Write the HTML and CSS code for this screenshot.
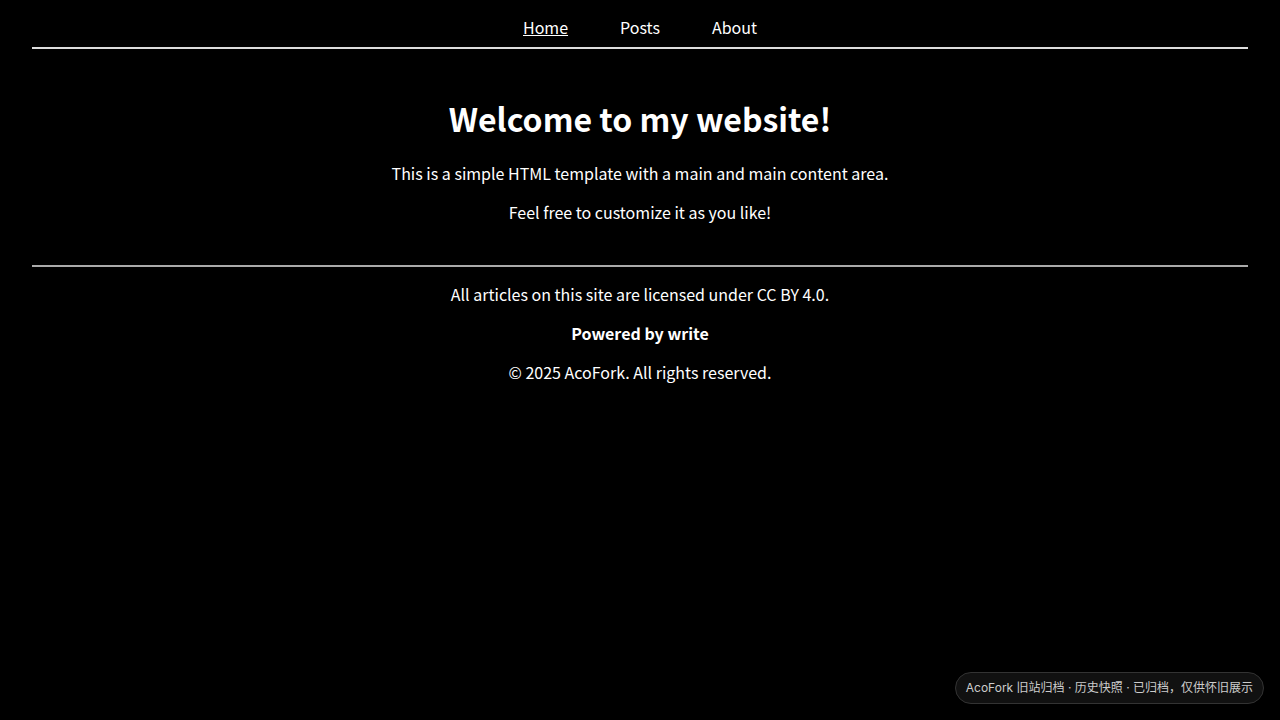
FILE: index.html
```html
<!DOCTYPE html>
<html lang="zh-CN">
<head>
    <meta charset="UTF-8">
    <meta name="viewport" content="width=device-width, initial-scale=1.0">
    <link rel="stylesheet" href="styles.css">
</head>
<body>
<header class="site-header">
    <nav class="nav">
        <a href="#" class="active">Home</a>
        <a href="#">Posts</a>
        <a href="#">About</a>
    </nav>
</header>
<main class="main">
    <h1>Welcome to my website!</h1>
    <p>This is a simple HTML template with a main and main content area.</p>
    <p>Feel free to customize it as you like!</p>
</main>
<footer class="site-footer">
    <p>All articles on this site are licensed under CC BY 4.0.</p>
    <p><strong>Powered by write</strong></p>
    <p>© 2025 AcoFork. All rights reserved.</p>
</footer>
<div class="archive-badge">AcoFork 旧站归档 · 历史快照 · 已归档，仅供怀旧展示</div>
</body>
</html>
```

FILE: styles.css
```css
html, body{
	background:#000;
}
body{
	margin:0;
	padding:0 32px;
	color:#fff;
	font-family:"Noto Sans CJK SC", "Noto Sans", sans-serif;
	font-size:16px;
	line-height:23px;
	text-align:center;
}
.site-header{
	border-bottom:2px solid #ddd;
}
.nav{
	display:flex;
	justify-content:center;
	gap:52px;
	padding:16px 0 8px;
}
.nav a{
	color:#fff;
	text-decoration:none;
}
.nav a.active{
	text-decoration:underline;
}
.main{
	padding:25px 0;
}
.main h1{
	font-size:32px;
	line-height:46px;
	margin:21px 0;
}
.main p{
	margin:16px 0;
}
.site-footer{
	border-top:2px solid #aaa;
}
.site-footer p{
	margin:16px 0;
}
.archive-badge{
	position:fixed;
	right:16px;
	bottom:16px;
	padding:7px 10px;
	border:1px solid #333;
	border-radius:16px;
	background:#111;
	color:#ccc;
	font-family:Inter, "Noto Sans CJK SC", sans-serif;
	font-size:12px;
	line-height:16px;
}
```
